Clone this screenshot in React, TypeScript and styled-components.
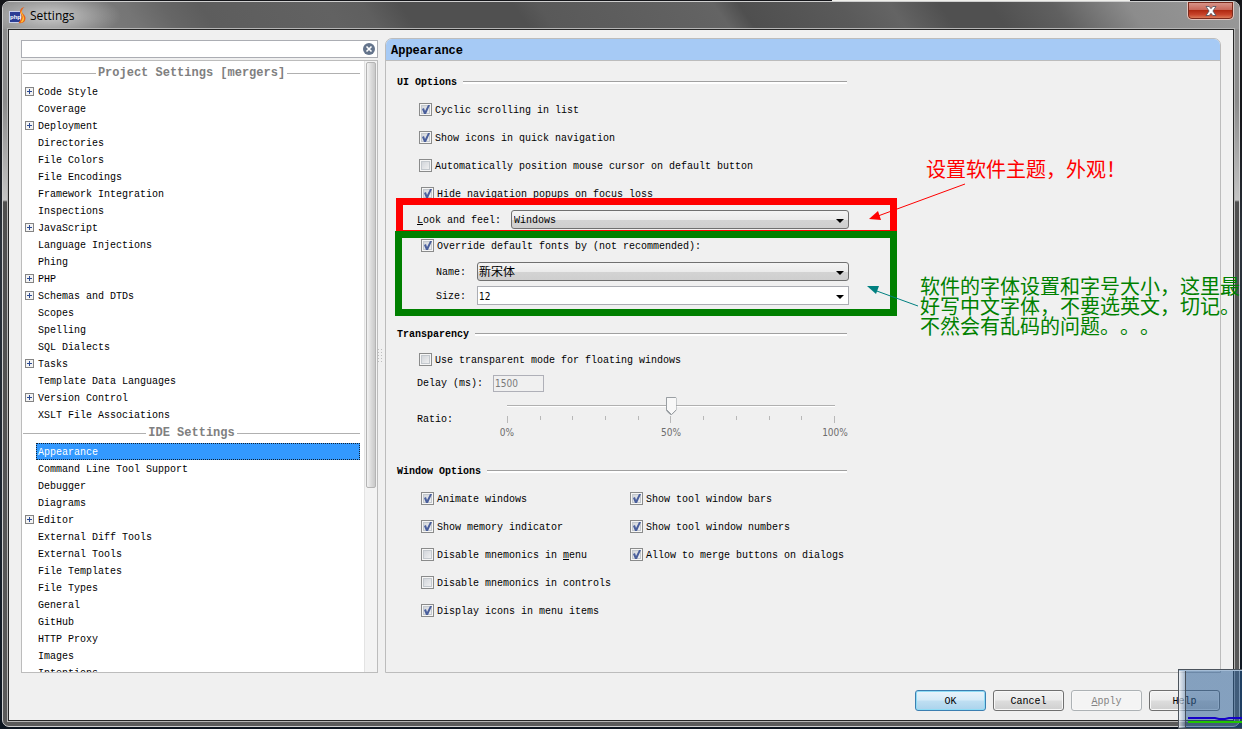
import React from "react";
import styled, { createGlobalStyle, css } from "styled-components";

const GlobalStyle = createGlobalStyle`
  * { box-sizing: border-box; }
  body { margin: 0; background: #15161a; }
  body, button, input, select {
    font-family: "Liberation Mono", "Noto Sans CJK SC", monospace;
    font-size: 10px;
    line-height: 16px;
    color: #000;
  }
  ul { list-style: none; margin: 0; padding: 0; }
`;

const Desktop = styled.div`
  position: relative;
  display: flex;
  height: 100vh;
  padding: 1px 2px 2px;
  overflow: hidden;
  background:
    linear-gradient(90deg, #15161a 67%, #f0f0ec 67% 91%, #15161a 91%) top / 100% 1px no-repeat,
    linear-gradient(#15161a 0 120px, #2b323b 240px, #0c1520 100%);
`;

const Frame = styled.div`
  flex: 1;
  min-width: 0;
  display: flex;
  flex-direction: column;
  padding: 0 5px 5px;
  border: 1px solid #cfcfcf;
  border-radius: 7px;
  background: linear-gradient(#8c8c8c 0, #8c8c8c 100px, #c4c4c4 198px, #4f4f4f 200px, #5a5a5a 100%);
`;

const TitleBar = styled.header`
  flex: none;
  display: flex;
  align-items: center;
  gap: 4px;
  height: 27px;
  margin: 0 -5px;
  padding: 0 5px 0 6px;
  border-radius: 6px 6px 0 0;
  background:
    radial-gradient(ellipse 70px 24px at 48px 14px, rgba(225, 225, 225, 0.75), rgba(225, 225, 225, 0) 100%),
    linear-gradient(55deg, #8a8a8a 0, #757575 11%, #666 14%, #5d5d5d 17%, #626262 27%, #5f5f5f 30%, #505050 33%,
      #505050 42%, #595959 44%, #626262 56%, #646464 58%, #4f4f4f 60%, #5a5a5a 68%, #646464 72%, #505050 76%,
      #505050 80%, #606060 85%, #8c8c8c 91%, #999 100%);
`;

const Title = styled.h1`
  flex: 1;
  margin: 0;
  font: 400 12px/20px "Open Sans", sans-serif;
`;

const CloseButton = styled.button`
  align-self: flex-start;
  display: flex;
  align-items: center;
  justify-content: center;
  width: 47px;
  height: 18px;
  padding: 0;
  border: 1px solid #e3c4bd;
  border-top: 0;
  border-radius: 0 0 5px 5px;
  box-shadow: inset 0 0 0 1px #7a2a1c;
  background: linear-gradient(#d99a8f 0, #c8685a 45%, #b02a12 50%, #c8452b 75%, #e08a66 100%);
`;

const Client = styled.main`
  flex: 1;
  min-height: 0;
  display: flex;
  flex-direction: column;
  padding: 8px 12px 9px;
  border: 1px solid #262626;
  box-shadow: 0 0 0 1px #b5b5b5;
  background: #f0f0f0;
`;

const Columns = styled.div`
  flex: 1;
  min-height: 0;
  display: flex;
`;

const Sidebar = styled.nav`
  flex: 0 0 357px;
  display: flex;
  flex-direction: column;
  gap: 2px;
  padding-top: 2px;
`;

const SearchBox = styled.div`
  flex: none;
  display: flex;
  align-items: center;
  height: 18px;
  padding-right: 2px;
  border: 1px solid #abadb3;
  background: #fff;
`;

const SearchInput = styled.input`
  flex: 1;
  min-width: 0;
  border: 0;
  padding: 0 2px;
  outline: 0;
  background: none;
`;

const PlainButton = styled.button`
  display: flex;
  padding: 0;
  border: 0;
  background: none;
`;

const TreeBox = styled.div`
  flex: 1;
  min-height: 0;
  display: flex;
  overflow: hidden;
  border: 1px solid #bcbcbc;
  background: #fff;
`;

const Tree = styled.div`
  flex: 1;
  padding: 2px 4px 0 1px;
`;

const ScrollTrack = styled.div`
  flex: 0 0 13px;
  padding: 1px;
  border-left: 1px solid #e3e3e3;
  background: #f3f3f3;
`;

const ScrollThumb = styled.div`
  height: 70%;
  border: 1px solid #b4b4b4;
  border-radius: 2px;
  background: linear-gradient(90deg, #f3f3f3, #dcdcdc 50%, #c9c9c9);
`;

const GroupTitle = styled.h2`
  display: flex;
  align-items: center;
  gap: 2px;
  height: 20px;
  margin: 0;
  font-size: 12px;
  line-height: 20px;
  color: #808080;
  white-space: nowrap;
  &::before, &::after {
    content: "";
    flex: 1;
    height: 1px;
    background: #b0b0b0;
  }
`;

const TreeRow = styled.li`
  display: flex;
  align-items: center;
  height: 17px;
  padding-left: 2px;
`;

const Expander = styled.span`
  flex: 0 0 11px;
  display: flex;
`;

const TreeLabel = styled.button<{ $selected?: boolean }>`
  flex: 1;
  height: 17px;
  padding: 1px 1px 0;
  border: 1px solid transparent;
  background: none;
  text-align: left;
  line-height: 15px;
  ${(p) => p.$selected && css`
    border: 1px dotted #123;
    background: #3399ff;
    color: #fff;
  `}
`;

const Splitter = styled.div`
  flex: 0 0 7px;
  display: flex;
  align-items: center;
  &::before {
    content: "";
    width: 5px;
    height: 14px;
    background: repeating-linear-gradient(#bdbdbd 0 1px, transparent 1px 3px);
    mask: repeating-linear-gradient(90deg, #000 0 1px, transparent 1px 3px);
  }
`;

const Panel = styled.section`
  flex: 1;
  min-width: 0;
  border: 1px solid #bcbcbc;
  border-radius: 7px 7px 0 0;
`;

const PanelTitle = styled.h2`
  height: 22px;
  margin: 0;
  padding: 2px 5px 0;
  border-bottom: 1px solid #bcbcbc;
  border-radius: 6px 6px 0 0;
  background: #a6caf5;
  font-size: 12px;
  line-height: 20px;
`;

const Form = styled.form`
  width: 461px;
  padding: 11px 0 0 11px;
`;

const Section = styled.section`
  margin-bottom: 16px;
`;

const SectionTitle = styled.h3`
  display: flex;
  align-items: center;
  gap: 6px;
  height: 20px;
  margin: 0;
  font-size: 10px;
  line-height: 22px;
  &::after {
    content: "";
    flex: 1;
    height: 2px;
    border-top: 1px solid #a0a0a0;
    background: #fff;
  }
  span { padding-top: 2px; }
`;

const Options = styled.div<{ $indent?: number; $top?: number }>`
  padding: ${(p) => p.$top ?? 4}px 0 0 ${(p) => p.$indent ?? 22}px;
`;

const OptionGrid = styled(Options)`
  display: grid;
  grid-template-columns: 209px 1fr;
`;

const CheckLabel = styled.label`
  display: flex;
  align-items: center;
  gap: 3px;
  height: 28px;
  padding-bottom: 1px;
  white-space: nowrap;
  span { padding-top: 3px; }
`;

const CheckInput = styled.input`
  appearance: none;
  flex: none;
  width: 13px;
  height: 13px;
  margin: 0;
  border: 1px solid #8a8b8b;
  box-shadow: inset 0 0 0 1px #f6f6f6, inset 0 0 0 2px #c3c8cd;
  background: linear-gradient(135deg, #cbcfd5, #f6f6f6);
  &:checked::before {
    content: "";
    display: block;
    width: 11px;
    height: 11px;
    background: #4a5f9c;
    clip-path: polygon(2px 5px, 4px 4px, 5px 7px, 8px 1px, 10px 1px, 6px 10px, 4px 10px);
  }
`;

const Field = styled.div<{ $height?: number; $indent?: number }>`
  display: flex;
  align-items: center;
  height: ${(p) => p.$height ?? 24}px;
  padding-left: ${(p) => p.$indent ?? 20}px;
`;

const FieldLabel = styled.label<{ $width: number }>`
  flex: 0 0 ${(p) => p.$width}px;
  padding-top: 2px;
  white-space: nowrap;
`;

const SelectWrap = styled.div`
  flex: 1;
  display: flex;
  position: relative;
  margin-right: -2px;
  padding-bottom: 1px;
  &::after {
    content: "";
    position: absolute;
    right: 5px;
    top: 9px;
    border: 4px solid transparent;
    border-top-color: #000;
    border-bottom: 0;
    pointer-events: none;
  }
`;

const Select = styled.select<{ $kind?: "name" | "editable" }>`
  appearance: none;
  flex: 1;
  height: 19px;
  padding: 2px 2px 0;
  border: 1px solid #707070;
  border-radius: 3px;
  background: linear-gradient(#f4f4f4, #ebebeb 50%, #d3d3d3 55%, #cfcfcf);
  line-height: 15px;
  ${(p) => p.$kind === "name" && css`
    font-size: 12px;
    padding: 3px 1px 0;
  `}
  ${(p) => p.$kind === "editable" && css`
    padding: 1px 1px 0;
    border-color: #abadb3;
    border-radius: 0;
    background: #fff;
    font-family: "DejaVu Sans Condensed", sans-serif;
  `}
`;

const DelayInput = styled.input`
  width: 51px;
  height: 17px;
  padding: 0 1px;
  border: 1px solid #afb0b8;
  background: #f0f0f0;
  color: #7a7a7a;
  font-family: "DejaVu Sans Condensed", sans-serif;
`;

const SliderBlock = styled.div`
  width: 358px;
  padding-top: 1px;
`;

const Range = styled.input`
  appearance: none;
  display: block;
  width: 338px;
  height: 18px;
  margin: 0 10px;
  background: linear-gradient(#b0b0b0, #b0b0b0) 5px 8px / 328px 1px no-repeat,
    linear-gradient(#fff, #fff) 5px 9px / 328px 1px no-repeat;
  &::-webkit-slider-thumb {
    appearance: none;
    width: 11px;
    height: 18px;
    border: 0;
    clip-path: polygon(1px 0, 10px 0, 11px 1px, 11px 13px, 6px 18px, 5px 18px, 0 13px, 0 1px);
    background: linear-gradient(#f8f8f8, #f8f8f8) 1px 1px / 9px 12px no-repeat,
      conic-gradient(from 315deg at 50% 100%, #f8f8f8 90deg, #9a9fa3 0) 1px 12px / 9px 5px no-repeat, #9a9fa3;
  }
`;

const Ticks = styled.div`
  display: flex;
  justify-content: space-between;
  height: 7px;
  margin: 1px 15px 2px;
`;

const Tick = styled.span<{ $major: boolean }>`
  width: 1px;
  height: ${(p) => (p.$major ? 7 : 4)}px;
  background: #b8b8b8;
`;

const TickLabels = styled.div`
  display: flex;
  justify-content: space-between;
  color: #6d6d6d;
  font-family: "DejaVu Sans Condensed", sans-serif;
  span { width: 30px; text-align: center; }
`;

const Footer = styled.footer`
  flex: none;
  display: flex;
  justify-content: flex-end;
  gap: 7px;
  padding: 17px 1px 0 0;
`;

const PushButton = styled.button<{ $primary?: boolean }>`
  width: 71px;
  height: 21px;
  padding: 2px 0 0;
  border: 1px solid #707070;
  border-radius: 3px;
  box-shadow: inset 0 0 0 1px #f8f8f8;
  background: linear-gradient(#f2f2f2, #ebebeb 48%, #dddddd 52%, #cfcfcf);
  line-height: 16px;
  ${(p) => p.$primary && css`
    border-color: #3c7fb1;
    box-shadow: inset 0 0 0 1px #8fdcf5;
    background: linear-gradient(#eaf4fb, #d5ebf8 48%, #bfdff2 52%, #abd3ec);
  `}
  &:disabled {
    border-color: #adb2b5;
    background: #f4f4f4;
    color: #838383;
  }
`;

/* Mark-up drawn over the dialog: frames, arrows and notes. */
const Overlay = styled.div`
  position: absolute;
  inset: 0;
  overflow: hidden;
  pointer-events: none;
`;

const MarkFrame = styled.div<{ $color: string; $x: number; $y: number; $w: number; $h: number }>`
  position: absolute;
  left: ${(p) => p.$x}px;
  top: ${(p) => p.$y}px;
  width: ${(p) => p.$w}px;
  height: ${(p) => p.$h}px;
  border: 7px solid ${(p) => p.$color};
`;

const MarkLine = styled.div`
  position: absolute;
  left: 396px;
  top: 230px;
  width: 501px;
  height: 1px;
  background: #ff0000;
`;

const Arrows = styled.svg`
  position: absolute;
  left: 860px;
  top: 180px;
`;

const Note = styled.p<{ $color: string; $x: number; $y: number }>`
  position: absolute;
  left: ${(p) => p.$x}px;
  top: ${(p) => p.$y}px;
  margin: 0;
  color: ${(p) => p.$color};
  font: 400 20px/20px "Noto Sans CJK SC", sans-serif;
  font-kerning: none;
  font-feature-settings: "chws" 0, "halt" 0;
  text-spacing-trim: space-all;
  white-space: nowrap;
`;

const Meter = styled.div`
  position: absolute;
  right: 0;
  bottom: 0;
  width: 64px;
  height: 60px;
  border: 1px solid #4b535c;
  border-right: 0;
  background: linear-gradient(90deg, rgba(235, 240, 246, 0.75) 0, rgba(120, 150, 185, 0.6) 6px, #454d58 6px, #454d58 7px,
    rgba(44, 95, 150, 0.55) 7px);
  box-shadow: inset 0 1px 0 #a5bdd6;
`;

const MeterLines = styled.svg`
  position: absolute;
  left: 8px;
  bottom: 1px;
`;

const projectItems = ["+Code Style", "Coverage", "+Deployment", "Directories", "File Colors", "File Encodings",
  "Framework Integration", "Inspections", "+JavaScript", "Language Injections", "Phing", "+PHP", "+Schemas and DTDs",
  "Scopes", "Spelling", "SQL Dialects", "+Tasks", "Template Data Languages", "+Version Control", "XSLT File Associations"];
const ideItems = ["Appearance", "Command Line Tool Support", "Debugger", "Diagrams", "+Editor", "External Diff Tools",
  "External Tools", "File Templates", "File Types", "General", "GitHub", "HTTP Proxy", "Images", "Intentions"];

const PlusIcon = () => (
  <svg width="9" height="9" viewBox="0 0 9 9" shapeRendering="crispEdges">
    <rect width="9" height="9" rx="1" fill="#848484" />
    <rect x="1" y="1" width="7" height="7" fill="#f3f3f3" />
    <path d="M2 4h5v1H2zM4 2h1v5H4z" fill="#2b4a93" />
  </svg>
);

const AppIcon = () => (
  <svg width="17" height="17" viewBox="0 0 17 17">
    <rect x="0.5" y="4.5" width="11" height="11" fill="#2b3d94" stroke="#c9d0ea" />
    <text x="1" y="12" fontSize="6" fontWeight="700" fontFamily="Liberation Sans, sans-serif" fill="#fff">php</text>
    <path d="M15.500 0c-3 .5-5.500 3-4 6.500 1 2 1.500 3 .5 5.500l-2.500 4c4.500 1 7-1.500 7-5 0-3-3.500-4-3.500-6.500 0-2 1-3.500 2.500-4.500z" fill="#e8631a" />
    <path d="M13 3c-1.500 2-1 4 0 5 1.500 2 .5 5-1.500 7.500 2.500 0 3.500-2 3.500-4 0-3.500-3-4.500-2-8.500z" fill="#ffc637" />
  </svg>
);

const TreeGroup = ({ title, items, selected }: { title: string; items: string[]; selected?: string }) => (
  <>
    <GroupTitle>{title}</GroupTitle>
    <ul>
      {items.map((raw) => {
        const name = raw.replace("+", "");
        return (
          <TreeRow key={name}>
            <Expander>{raw !== name && <PlusIcon />}</Expander>
            <TreeLabel type="button" $selected={name === selected}>{name}</TreeLabel>
          </TreeRow>
        );
      })}
    </ul>
  </>
);

const Check = ({ on, children }: { on?: boolean; children: React.ReactNode }) => (
  <CheckLabel>
    <CheckInput type="checkbox" defaultChecked={on} />
    <span>{children}</span>
  </CheckLabel>
);

export default function App() {
  return (
    <>
      <GlobalStyle />
      <Desktop>
        <Frame>
          <TitleBar>
            <AppIcon />
            <Title>Settings</Title>
            <CloseButton type="button" aria-label="Close">
              <svg width="12" height="10" viewBox="0 0 12 10">
                <path d="M1 .5h3.200L6 2.700 7.800.5H11L7.900 5 11 9.500H7.800L6 7.300 4.200 9.500H1L4.100 5z" fill="#fff" stroke="#4a4f5c" strokeWidth=".8" />
              </svg>
            </CloseButton>
          </TitleBar>
          <Client>
            <Columns>
              <Sidebar>
                <SearchBox>
                  <SearchInput type="text" aria-label="Search settings" />
                  <PlainButton type="button" aria-label="Clear">
                    <svg width="12" height="12" viewBox="0 0 12 12">
                      <circle cx="6" cy="6" r="6" fill="#64748c" />
                      <path d="M3.500 3.500l5 5M8.500 3.500l-5 5" stroke="#fff" strokeWidth="1.600" />
                    </svg>
                  </PlainButton>
                </SearchBox>
                <TreeBox>
                  <Tree>
                    <TreeGroup title="Project Settings [mergers]" items={projectItems} />
                    <TreeGroup title="IDE Settings" items={ideItems} selected="Appearance" />
                  </Tree>
                  <ScrollTrack><ScrollThumb /></ScrollTrack>
                </TreeBox>
              </Sidebar>
              <Splitter />
              <Panel>
                <PanelTitle>Appearance</PanelTitle>
                <Form>
                  <Section>
                    <SectionTitle><span>UI Options</span></SectionTitle>
                    <Options>
                      <Check on>Cyclic scrolling in list</Check>
                      <Check on>Show icons in quick navigation</Check>
                      <Check>Automatically position mouse cursor on default button</Check>
                    </Options>
                    <Options $indent={24} $top={0}>
                      <Check on>Hide navigation popups on focus loss</Check>
                    </Options>
                    <Field>
                      <FieldLabel $width={94} htmlFor="laf"><u>L</u>ook and feel:</FieldLabel>
                      <SelectWrap>
                        <Select id="laf"><option>Windows</option></Select>
                      </SelectWrap>
                    </Field>
                    <Options $indent={24} $top={0}>
                      <Check on>Override default fonts by (not recommended):</Check>
                    </Options>
                    <Field $indent={39}>
                      <FieldLabel $width={41} htmlFor="font-name">Name:</FieldLabel>
                      <SelectWrap>
                        <Select id="font-name" $kind="name"><option>新宋体</option></Select>
                      </SelectWrap>
                    </Field>
                    <Field $indent={39}>
                      <FieldLabel $width={41} htmlFor="font-size">Size:</FieldLabel>
                      <SelectWrap>
                        <Select id="font-size" $kind="editable"><option>12</option></Select>
                      </SelectWrap>
                    </Field>
                  </Section>
                  <Section>
                    <SectionTitle><span>Transparency</span></SectionTitle>
                    <Options $top={2}>
                      <Check>Use transparent mode for floating windows</Check>
                    </Options>
                    <Field $height={18}>
                      <FieldLabel $width={76} htmlFor="delay">Delay (ms):</FieldLabel>
                      <DelayInput id="delay" type="text" defaultValue="1500" disabled />
                    </Field>
                    <Field $height={53}>
                      <FieldLabel $width={75} htmlFor="ratio">Ratio:</FieldLabel>
                      <SliderBlock>
                        <Range id="ratio" type="range" min={0} max={100} defaultValue={50} disabled />
                        <Ticks>
                          {Array.from({ length: 11 }, (_, i) => <Tick key={i} $major={i % 5 === 0} />)}
                        </Ticks>
                        <TickLabels><span>0%</span><span>50%</span><span>100%</span></TickLabels>
                      </SliderBlock>
                    </Field>
                  </Section>
                  <Section>
                    <SectionTitle><span>Window Options</span></SectionTitle>
                    <OptionGrid $indent={24}>
                      <Check on>Animate windows</Check>
                      <Check on>Show tool window bars</Check>
                      <Check on>Show memory indicator</Check>
                      <Check on>Show tool window numbers</Check>
                      <Check>Disable mnemonics in <u>m</u>enu</Check>
                      <Check on>Allow to merge buttons on dialogs</Check>
                      <Check>Disable mnemonics in controls</Check>
                      <span />
                      <Check on>Display icons in menu items</Check>
                    </OptionGrid>
                  </Section>
                </Form>
              </Panel>
            </Columns>
            <Footer>
              <PushButton type="button" $primary>OK</PushButton>
              <PushButton type="button">Cancel</PushButton>
              <PushButton type="button" disabled><u>A</u>pply</PushButton>
              <PushButton type="button">Help</PushButton>
            </Footer>
          </Client>
        </Frame>
        <Overlay>
          <MarkFrame $color="#ff0000" $x={396} $y={198} $w={501} $h={40} />
          <MarkLine />
          <MarkFrame $color="#008000" $x={395} $y={231} $w={502} $h={85} />
          <Arrows width="120" height="130" viewBox="860 180 120 130">
            <path d="M965 184L878 216" stroke="#ff0000" />
            <path d="M869 219l9-8 3 9z" fill="#ff0000" />
            <path d="M918 306L874 290" stroke="#008080" />
            <path d="M867 286l12 0-3 8z" fill="#008080" />
          </Arrows>
          <Note $color="#ff0000" $x={926} $y={159}>设置软件主题，外观！</Note>
          <Note $color="#008000" $x={920} $y={276}>
            软件的字体设置和字号大小，这里最<br />好写中文字体，不要选英文，切记。<br />不然会有乱码的问题。。。
          </Note>
          <Meter>
            <MeterLines width="56" height="12" viewBox="0 0 56 12">
              <path d="M1 3h27l4 1h6l4-1h14" fill="none" stroke="#1400c8" strokeWidth="2" />
              <path d="M1 7h55" stroke="#22c400" strokeWidth="2" />
            </MeterLines>
          </Meter>
        </Overlay>
      </Desktop>
    </>
  );
}
